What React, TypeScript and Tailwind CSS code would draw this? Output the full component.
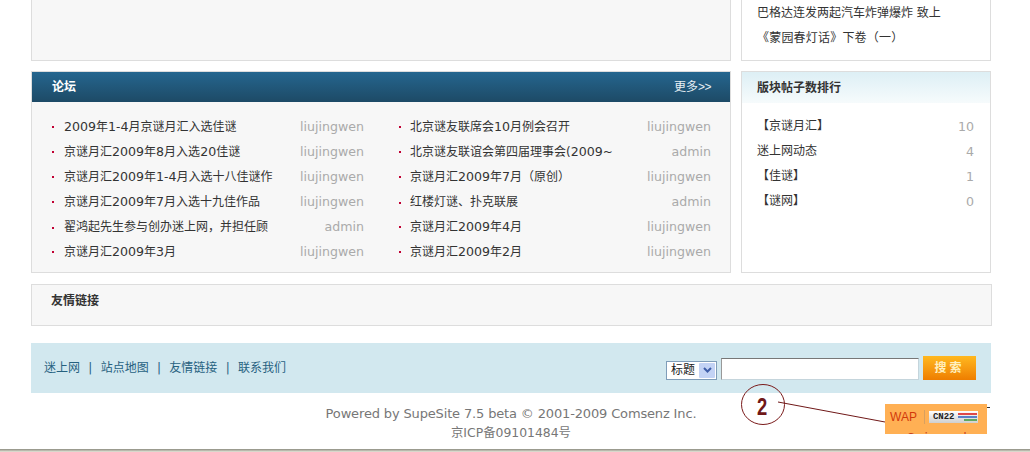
const font = { fontFamily: '"DejaVu Sans", "Noto Sans CJK SC", sans-serif' };

const left: [string, string][] = [
  ["2009年1-4月京谜月汇入选佳谜", "liujingwen"],
  ["京谜月汇2009年8月入选20佳谜", "liujingwen"],
  ["京谜月汇2009年1-4月入选十八佳谜作", "liujingwen"],
  ["京谜月汇2009年7月入选十九佳作品", "liujingwen"],
  ["翟鸿起先生参与创办迷上网，并担任顾", "admin"],
  ["京谜月汇2009年3月", "liujingwen"],
];
const right: [string, string][] = [
  ["北京谜友联席会10月例会召开", "liujingwen"],
  ["北京谜友联谊会第四届理事会(2009~", "admin"],
  ["京谜月汇2009年7月（原创）", "liujingwen"],
  ["红楼灯谜、扑克联展", "admin"],
  ["京谜月汇2009年4月", "liujingwen"],
  ["京谜月汇2009年2月", "liujingwen"],
];
const ranks: [string, string][] = [
  ["【京谜月汇】", "10"],
  ["迷上网动态", "4"],
  ["【佳谜】", "1"],
  ["【谜网】", "0"],
];

function Title({ text }: { text: string }) {
  return (
    <span className="pb-[1px] text-[12px] text-[#333333] whitespace-nowrap">
      {text.split(/([0-9]+)/).map((part, i) =>
        /^[0-9]+$/.test(part) ? (
          <span key={i} className="text-[12.6px]">{part}</span>
        ) : (
          <span key={i}>{part}</span>
        ),
      )}
    </span>
  );
}

function Row({ title, author, narrow }: { title: string; author: string; narrow?: boolean }) {
  return (
    <li className="flex h-[25px] items-center justify-between">
      <span className="flex items-center">
        <span className={`h-[2px] w-[2px] bg-[#c00033] ${narrow ? "mr-[9px]" : "mr-[10px]"}`} />
        <Title text={title} />
      </span>
      <span className="text-[12.6px] text-[#aaaaaa]">{author}</span>
    </li>
  );
}

export default function App() {
  return (
    <div className="relative h-[452px] w-[1030px] overflow-hidden bg-white" style={font}>
      <div className="flex flex-col pl-[31px]">
        <div className="flex gap-[10px]">
          <div className="h-[61px] w-[700px] border-x border-b border-[#dddddd] bg-[#f7f7f7]" />
          <div className="h-[61px] w-[250px] border-x border-b border-[#dddddd] bg-white pl-[15px] pt-[1px] text-[12px] leading-[24px] text-[#333333]">
            <p>巴格达连发两起汽车炸弹爆炸 致上</p>
            <p className="pt-[1px] tracking-[0.2px]">《蒙园春灯话》下卷（一）</p>
          </div>
        </div>

        <div className="mt-[10px] flex gap-[10px]">
          <section className="h-[202px] w-[700px] border border-[#dddddd] bg-[#f7f7f7]">
            <div className="flex h-[30px] items-center justify-between bg-gradient-to-b from-[#25668f] to-[#1d4a66] pl-[20px] pr-[19px] text-[12px] text-white">
              <h2 className="font-bold">论坛</h2>
              <span className="text-[#e6eef3]">
                更多<span className="tracking-[-0.5px]" style={{ fontFamily: '"Liberation Sans", sans-serif' }}>&gt;&gt;</span>
              </span>
            </div>
            <div className="flex gap-[34px] pl-[20px] pr-[19px] pt-[13px]">
              <ul className="w-[312px]">
                {left.map(([t, a]) => (
                  <Row key={t} title={t} author={a} />
                ))}
              </ul>
              <ul className="w-[313px] pl-[1px]">
                {right.map(([t, a]) => (
                  <Row key={t} title={t} author={a} narrow />
                ))}
              </ul>
            </div>
          </section>

          <aside className="h-[202px] w-[250px] border border-[#dddddd] bg-white">
            <div className="flex h-[31px] items-center bg-gradient-to-b from-[#ddeff5] to-[#f6fbfc] pl-[15px] text-[12px] font-bold text-[#333333]">
              版块帖子数排行
            </div>
            <ul className="pl-[15px] pr-[16px] pt-[11px]">
              {ranks.map(([t, n]) => (
                <li key={t} className="flex h-[25px] items-center justify-between">
                  <span className="pb-[2px] text-[12px] text-[#333333]">{t}</span>
                  <span className="pt-[2px] text-[12.6px] text-[#aaaaaa]">{n}</span>
                </li>
              ))}
            </ul>
          </aside>
        </div>

        <div className="mt-[11px] h-[42px] w-[961px] border border-[#dddddd] bg-[#f7f7f7] pl-[19px] pt-[7px] text-[12px] font-bold text-[#333333]">
          友情链接
        </div>

        <div className="mt-[17px] flex h-[50px] w-[960px] items-center justify-between bg-[#d2e8ef] pl-[13px] pr-[15px]">
          <nav className="flex items-center text-[12px] text-[#26617f]">
            <span>迷上网</span>
            <span className="mx-[8.3px]">|</span>
            <span>站点地图</span>
            <span className="mx-[8.3px]">|</span>
            <span>友情链接</span>
            <span className="mx-[8.3px]">|</span>
            <span>联系我们</span>
          </nav>
          <div className="flex items-center">
            <div className="mt-[4px] flex h-[19px] w-[51px] items-center justify-between border border-[#7f9db9] bg-white pl-[4px] pr-[1px] text-[12px] text-[#222222]">
              <span>标题</span>
              <span className="flex h-[15px] w-[16px] items-center justify-center rounded-[1px] bg-[#c3d3f5]">
                <svg width="9" height="6" viewBox="0 0 9 6">
                  <path d="M1 1l3.5 3.5L8 1" fill="none" stroke="#3f5ea8" strokeWidth="2" />
                </svg>
              </span>
            </div>
            <div className="ml-[4px] mt-[1px] h-[22px] w-[198px] border border-t-[#777777] border-l-[#999999] border-r-[#c5d5dc] border-b-[#c5d5dc] bg-white" />
            <div className="ml-[4px] flex h-[24px] w-[53px] items-center justify-center bg-gradient-to-b from-[#ffb81e] to-[#ee7e00] text-[12px] font-bold tracking-[3px] text-[#fff0c0]">
              搜索
            </div>
          </div>
        </div>

        <footer className="mt-[11px] w-[960px] text-center text-[#777777]">
          <p className="text-[13px] leading-[19px] tracking-[-0.15px]">Powered by SupeSite 7.5 beta © 2001-2009 Comsenz Inc.</p>
          <p className="text-[12.4px] leading-[20px]">京ICP备09101484号</p>
        </footer>
      </div>

      <div className="absolute bottom-0 left-0 h-[3px] w-full bg-gradient-to-b from-[#8c8c80] to-[#e8e8dc]" />

      <svg className="absolute left-[735px] top-[380px]" width="160" height="50" viewBox="0 0 160 50">
        <ellipse cx="28" cy="24.5" rx="21.5" ry="20" fill="none" stroke="#7a1a1a" strokeWidth="1" />
        <line x1="43" y1="22" x2="150" y2="42" stroke="#701818" strokeWidth="1" />
      </svg>
      <span className="absolute left-[757px] top-[394px] origin-left scale-x-[0.8] text-[23px] font-bold leading-[26px] text-[#701818]" style={{ fontFamily: '"Liberation Sans", sans-serif' }}>2</span>

      <div className="absolute left-[885px] top-[404px] h-[30px] w-[102px] overflow-hidden bg-[#ffb054]">
        <div className="flex h-[26px] items-center pl-[5px]">
          <span className="text-[12px] text-[#d2390b]" style={{ fontFamily: '"Liberation Sans", sans-serif' }}>WAP</span>
          <span className="ml-[7px] h-[14px] w-[1px] bg-[#d8a060]" />
          <div className="ml-[4px] flex h-[12px] w-[49px] items-center gap-[3px] bg-gradient-to-b from-[#ffffff] to-[#cfcfcf] pl-[4px]">
            <span className="text-[9px] leading-none font-bold text-[#222222]" style={{ fontFamily: '"Liberation Mono", monospace' }}>CN22</span>
            <span className="flex flex-col gap-[1px]">
              <span className="h-[2px] w-[19px] bg-[#e04848]" />
              <span className="h-[2px] w-[19px] bg-[#5a80c8]" />
              <span className="ml-[6px] h-[2px] w-[13px] bg-[#60a860]" />
            </span>
          </div>
        </div>
        <div className="mt-[1px] pl-[22px] text-[12px] leading-[14px] text-[#c8401a]">Swiss and dead</div>
      </div>
      <span className="absolute left-[987px] top-[407px] h-[1px] w-[3px] bg-[#333333]" />
    </div>
  );
}
